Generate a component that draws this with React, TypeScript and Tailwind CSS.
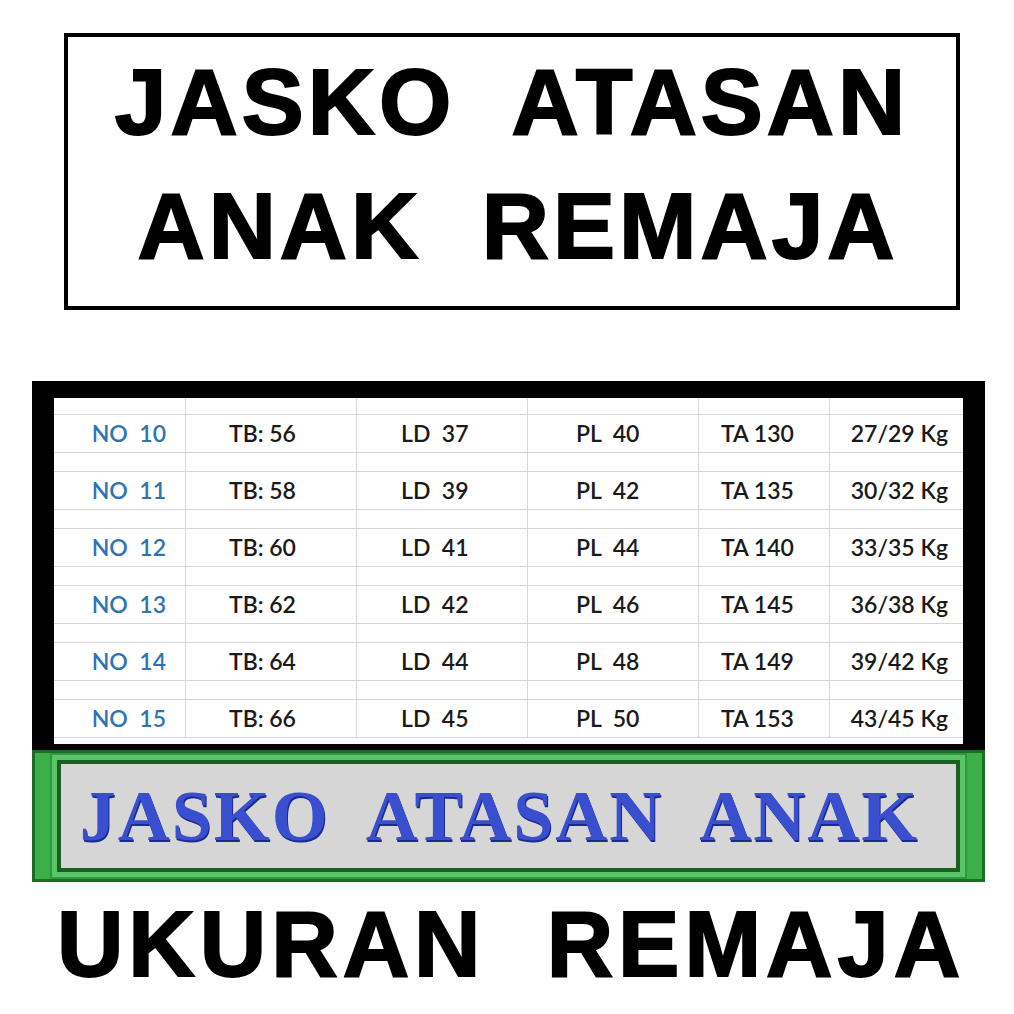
import React from 'react'

const rows = [
  ['NO  10', 'TB: 56', 'LD  37', 'PL  40', 'TA 130', '27/29 Kg'],
  ['NO  11', 'TB: 58', 'LD  39', 'PL  42', 'TA 135', '30/32 Kg'],
  ['NO  12', 'TB: 60', 'LD  41', 'PL  44', 'TA 140', '33/35 Kg'],
  ['NO  13', 'TB: 62', 'LD  42', 'PL  46', 'TA 145', '36/38 Kg'],
  ['NO  14', 'TB: 64', 'LD  44', 'PL  48', 'TA 149', '39/42 Kg'],
  ['NO  15', 'TB: 66', 'LD  45', 'PL  50', 'TA 153', '43/45 Kg'],
]

const cols = 'grid grid-cols-[132px_171px_171px_171px_131px_133px]'

// per-column alignment of the cell text
const cellAlign = [
  'justify-end pr-[19px] text-[#2e74b5]',
  'justify-start pl-[43px]',
  'justify-start pl-[44px]',
  'justify-start pl-[48px]',
  'justify-start pl-[22px]',
  'justify-end pr-[15px]',
]

function Spacer({ h }: { h: string }) {
  return (
    <div className={`${cols} ${h} border-b border-[#d6d6d6]`}>
      {[0, 1, 2, 3, 4, 5].map((i) => (
        <div key={i} className={i < 5 ? 'border-r border-[#d6d6d6]' : ''} />
      ))}
    </div>
  )
}

export default function App() {
  return (
    <div className="w-[1014px] h-[1014px] bg-white flex flex-col overflow-hidden">
      {/* Title box */}
      <div className="mt-[33px] ml-[64px] w-[896px] h-[277px] border-[4px] border-black flex flex-col items-center justify-center pb-[16px]">
        <div className="font-['Liberation_Sans',Arial,sans-serif] font-bold text-black text-[93px] leading-[124px] whitespace-pre tracking-[4px] [-webkit-text-stroke:2px_black]">
          JASKO  ATASAN
        </div>
        <div className="font-['Liberation_Sans',Arial,sans-serif] font-bold text-black text-[93px] leading-[124px] whitespace-pre tracking-[4px] [-webkit-text-stroke:2px_black] pl-[12px]">
          ANAK  REMAJA
        </div>
      </div>

      {/* Size table */}
      <div className="mt-[71px] ml-[32px] w-[953px] bg-black pt-[17px] pl-[22px] pr-[22px] pb-[6px]">
        <div className="bg-white h-[346px] font-['Lato','Open_Sans',sans-serif] font-semibold text-[23px] text-[#1a1a1a]">
          <Spacer h="h-[17px]" />
          {rows.map((r, ri) => (
            <React.Fragment key={ri}>
              <div className={`${cols} h-[38px] border-b border-[#d6d6d6]`}>
                {r.map((c, ci) => (
                  <div
                    key={ci}
                    className={`flex items-center whitespace-pre ${ci < 5 ? 'border-r border-[#d6d6d6]' : ''} ${cellAlign[ci]}`}
                  >
                    {c}
                  </div>
                ))}
              </div>
              {ri < 5 && <Spacer h="h-[19px]" />}
            </React.Fragment>
          ))}
        </div>
      </div>

      {/* Embroidered patch */}
      <div className="ml-[32px] w-[953px] h-[132px] bg-[#3cae4a] border-[3px] border-[#1d6b27] px-[17px] py-[2px]">
        <div className="h-full border-[5px] border-[#5cc468] shadow-[0_0_0_2px_#2f9a3c]">
          <div className="h-full border-[4px] border-[#1b5f23] bg-[#d6d6d6] flex items-center justify-center pr-[18px]">
            <span className="font-['Liberation_Serif','Times_New_Roman',serif] font-bold text-[72px] leading-none text-[#3a4fd0] whitespace-pre tracking-[2px] [text-shadow:1px_2px_0_#1c2a8a]">
              JASKO  ATASAN  ANAK
            </span>
          </div>
        </div>
      </div>

      {/* Bottom heading */}
      <div className="mt-[12px] self-center ml-[8px] font-['Liberation_Sans',Arial,sans-serif] font-bold text-black text-[92px] leading-[100px] whitespace-pre tracking-[5px] [-webkit-text-stroke:2px_black]">
        UKURAN  REMAJA
      </div>
    </div>
  )
}
